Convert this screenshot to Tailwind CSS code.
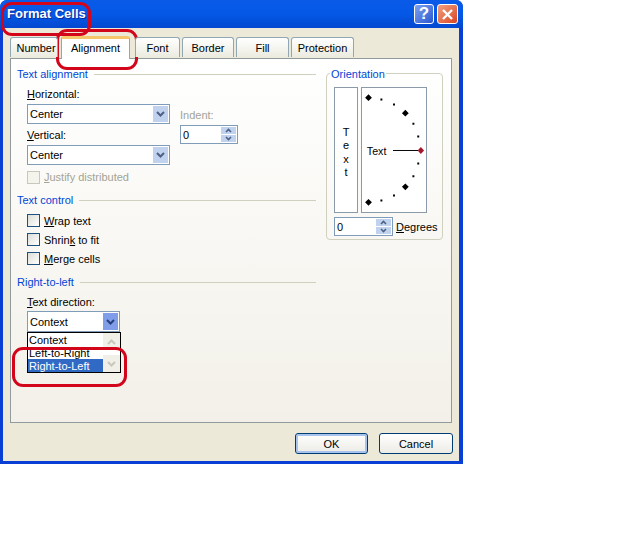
<!DOCTYPE html>
<html lang="en">
<head>
    <meta charset="UTF-8">
    <title>Format Cells</title>
    <script src="https://cdn.jsdelivr.net/npm/@tailwindcss/browser@4"></script>
</head>
<body class="bg-white">
<div class="relative w-[630px] h-[558px] overflow-hidden font-['Liberation_Sans',sans-serif] text-[11px] leading-[14px] text-black">

    <!-- window -->
    <div class="w-[463px] h-[464px] rounded-t-[7px] bg-[#0a3fd6] flex flex-col">
        <div class="h-[28px] shrink-0 rounded-t-[7px] bg-gradient-to-b from-[#0a5ae8] via-[#0458e6] to-[#0348d0] flex items-center pl-[7px] pr-[5px]">
            <span class="text-[13px] font-bold text-white [text-shadow:1px_1px_0_#0a2c9c]">Format Cells</span>
            <div class="ml-auto flex gap-[3px]">
                <div class="w-[20px] h-[20px] rounded-[3px] border border-white bg-gradient-to-br from-[#7fa2ee] to-[#2a55cf] flex items-center justify-center text-white text-[17px] font-bold">?</div>
                <div class="w-[21px] h-[20px] rounded-[3px] border border-white bg-gradient-to-br from-[#f0a080] to-[#d8401c] flex items-center justify-center">
                    <svg width="13" height="13" viewBox="0 0 13 13"><path d="M2 2 L11 11 M11 2 L2 11" stroke="white" stroke-width="2.4" fill="none"/></svg>
                </div>
            </div>
        </div>

        <div class="flex-1 ml-[3px] mr-[4px] mb-[3px] bg-[#ece9d8] pl-[7px] pt-[9px] flex flex-col">
            <!-- tabs -->
            <div class="h-[21px] flex items-end relative z-10 text-[11px]">
                <div class="w-[48px] h-[20px] mb-px pl-[4px] border border-b-0 border-[#91a7b4] rounded-t-[3px] bg-gradient-to-b from-white to-[#ecebe0] flex items-center justify-center">Number</div>
                <div class="w-[69px] h-[23px] ml-[3px] -mb-px pb-[3px] border-x border-[#91a7b4] border-t-[3px] border-t-[#f5c66a] rounded-t-[3px] bg-white flex items-center justify-center">Alignment</div>
                <div class="w-[45px] h-[20px] ml-[5px] mb-px border border-b-0 border-[#91a7b4] rounded-t-[3px] bg-gradient-to-b from-white to-[#ecebe0] flex items-center justify-center">Font</div>
                <div class="w-[52px] h-[20px] ml-[2px] mb-px border border-b-0 border-[#91a7b4] rounded-t-[3px] bg-gradient-to-b from-white to-[#ecebe0] flex items-center justify-center">Border</div>
                <div class="w-[53px] h-[20px] ml-[2px] mb-px border border-b-0 border-[#91a7b4] rounded-t-[3px] bg-gradient-to-b from-white to-[#ecebe0] flex items-center justify-center">Fill</div>
                <div class="w-[63px] h-[20px] ml-[2px] mb-px border border-b-0 border-[#91a7b4] rounded-t-[3px] bg-gradient-to-b from-white to-[#ecebe0] flex items-center justify-center">Protection</div>
            </div>

            <!-- panel -->
            <div class="w-[442px] h-[365px] border border-[#919b9c] bg-gradient-to-b from-white to-[#f2f0e8] pl-[6px] pt-[8px] flex">
                <div class="w-[299px]">
                    <div class="h-[14px] flex items-center gap-[6px]"><span class="text-[#0046d5]">Text alignment</span><div class="flex-1 h-px bg-[#d0d0bf]"></div></div>

                    <div class="flex ml-[10px]">
                        <div class="w-[153px]">
                            <div class="mt-[6px] h-[14px]"><u>H</u>orizontal:</div>
                            <div class="mt-[3px] w-[143px] h-[20px] border border-[#7f9db9] bg-white flex items-center pl-[2px] pr-[1px]">
                                <span>Center</span>
                                <div class="ml-auto w-[15px] h-[16px] bg-[#c1d2ee] flex items-center justify-center">
                                    <svg width="9" height="6" viewBox="0 0 9 6"><path d="M1 1 L4.5 4.5 L8 1" stroke="#4d6185" stroke-width="2" fill="none"/></svg>
                                </div>
                            </div>
                            <div class="mt-[4px] h-[14px]"><u>V</u>ertical:</div>
                            <div class="mt-[3px] w-[143px] h-[20px] border border-[#7f9db9] bg-white flex items-center pl-[2px] pr-[1px]">
                                <span>Center</span>
                                <div class="ml-auto w-[15px] h-[16px] bg-[#c1d2ee] flex items-center justify-center">
                                    <svg width="9" height="6" viewBox="0 0 9 6"><path d="M1 1 L4.5 4.5 L8 1" stroke="#4d6185" stroke-width="2" fill="none"/></svg>
                                </div>
                            </div>
                        </div>
                        <div class="pt-[27px]">
                            <div class="h-[14px] text-[#a3a396]">Indent:</div>
                            <div class="mt-[3px] w-[58px] h-[19px] border border-[#7f9db9] bg-white flex items-center pl-[2px] pr-[1px]">
                                <span>0</span>
                                <div class="ml-auto w-[15px] h-[15px] flex flex-col gap-px">
                                    <div class="flex-1 bg-[#c1d2ee] flex items-center justify-center"><svg width="7" height="5" viewBox="0 0 7 5"><path d="M1 4 L3.5 1.5 L6 4" stroke="#4d6185" stroke-width="1.6" fill="none"/></svg></div>
                                    <div class="flex-1 bg-[#c1d2ee] flex items-center justify-center"><svg width="7" height="5" viewBox="0 0 7 5"><path d="M1 1 L3.5 3.5 L6 1" stroke="#4d6185" stroke-width="1.6" fill="none"/></svg></div>
                                </div>
                            </div>
                        </div>
                    </div>

                    <div class="ml-[10px] mt-[6px] h-[13px] flex items-center gap-[4px] text-[#a3a396]">
                        <div class="w-[13px] h-[13px] border border-[#c9c7ba] bg-[#f4f3ec]"></div><span class="mb-[2px]"><u>J</u>ustify distributed</span>
                    </div>

                    <div class="mt-[9px] h-[14px] flex items-center gap-[6px]"><span class="text-[#0046d5]">Text control</span><div class="flex-1 h-px bg-[#d0d0bf]"></div></div>
                    <div class="ml-[10px] mt-[7px] h-[13px] flex items-center gap-[4px]">
                        <div class="w-[13px] h-[13px] border border-[#1c5180] bg-gradient-to-br from-[#dcdcd7] to-white"></div><span><u>W</u>rap text</span>
                    </div>
                    <div class="ml-[10px] mt-[6px] h-[13px] flex items-center gap-[4px]">
                        <div class="w-[13px] h-[13px] border border-[#1c5180] bg-gradient-to-br from-[#dcdcd7] to-white"></div><span>Shrin<u>k</u> to fit</span>
                    </div>
                    <div class="ml-[10px] mt-[6px] h-[13px] flex items-center gap-[4px]">
                        <div class="w-[13px] h-[13px] border border-[#1c5180] bg-gradient-to-br from-[#dcdcd7] to-white"></div><span><u>M</u>erge cells</span>
                    </div>

                    <div class="mt-[10px] h-[14px] flex items-center gap-[6px]"><span class="text-[#0046d5]">Right-to-left</span><div class="flex-1 h-px bg-[#d0d0bf]"></div></div>
                    <div class="ml-[10px] mt-[6px] h-[14px]"><u>T</u>ext direction:</div>
                    <div class="ml-[10px] mt-[2px] w-[93px] h-[21px] border border-[#7f9db9] bg-white flex items-center pl-[2px] pr-[1px]">
                        <span>Context</span>
                        <div class="ml-auto w-[15px] h-[17px] bg-[#7f9de8] flex items-center justify-center">
                            <svg width="9" height="6" viewBox="0 0 9 6"><path d="M1 1 L4.5 4.5 L8 1" stroke="#27407c" stroke-width="2" fill="none"/></svg>
                        </div>
                    </div>
                </div>

                <!-- orientation group -->
                <div class="relative ml-[10px] mt-[6px] w-[117px] h-[167px] border border-[#d0d0bf] rounded-[4px] pl-[7px] pt-[13px]">
                    <span class="absolute -top-[7px] left-[3px] px-px bg-white text-[#0046d5]">Orientation</span>
                    <div class="flex gap-[3px]">
                        <div class="w-[24px] h-[126px] border border-[#8a9aa8] bg-white flex flex-col items-center pt-[38px] leading-[13.4px]">
                            <span>T</span><span>e</span><span>x</span><span>t</span>
                        </div>
                        <svg width="66" height="126" viewBox="361 87 66 126" class="border border-[#8a9aa8] bg-white box-border">
                            <path d="M367.7 92.5 L371.2 96 L367.7 99.5 L364.2 96 Z M405.7 108.5 L409.2 112 L405.7 115.5 L402.2 112 Z M405.7 184.5 L409.2 188 L405.7 191.5 L402.2 188 Z M367.7 200.5 L371.2 204 L367.7 207.5 L364.2 204 Z" fill="#000"/>
                            <path d="M380 97h2v2h-2z M393 102h2v2h-2z M413 122h2v2h-2z M418 135h2v2h-2z M418 163h2v2h-2z M413 176h2v2h-2z M393 196h2v2h-2z M380 201h2v2h-2z" fill="#000"/>
                            <path d="M393 150.5 H419" stroke="#000" stroke-width="1"/>
                            <path d="M421.7 147 L425 150.5 L421.7 154 L418.4 150.5 Z" fill="#a5182c"/>
                            <text x="366" y="155" font-size="11" font-family="Liberation Sans" fill="#000">Text</text>
                        </svg>
                    </div>
                    <div class="flex items-center mt-[4px]">
                        <div class="w-[59px] h-[19px] border border-[#7f9db9] bg-white flex items-center pl-[2px] pr-[1px]">
                            <span>0</span>
                            <div class="ml-auto w-[15px] h-[15px] flex flex-col gap-px">
                                <div class="flex-1 bg-[#c1d2ee] flex items-center justify-center"><svg width="7" height="5" viewBox="0 0 7 5"><path d="M1 4 L3.5 1.5 L6 4" stroke="#4d6185" stroke-width="1.6" fill="none"/></svg></div>
                                <div class="flex-1 bg-[#c1d2ee] flex items-center justify-center"><svg width="7" height="5" viewBox="0 0 7 5"><path d="M1 1 L3.5 3.5 L6 1" stroke="#4d6185" stroke-width="1.6" fill="none"/></svg></div>
                            </div>
                        </div>
                        <span class="ml-[3px]"><u>D</u>egrees</span>
                    </div>
                </div>
            </div>

            <!-- buttons -->
            <div class="mt-[10px] flex gap-[11px] pl-[285px]">
                <button class="w-[73px] h-[21px] rounded-[3px] border border-[#003c74] bg-gradient-to-b from-white to-[#ecebe5] shadow-[inset_0_0_0_2px_#a9c4ec] flex items-center justify-center">OK</button>
                <button class="w-[74px] h-[21px] rounded-[3px] border border-[#003c74] bg-gradient-to-b from-white to-[#ecebe5] flex items-center justify-center">Cancel</button>
            </div>
        </div>
    </div>

    <!-- opened dropdown list -->
    <div class="absolute left-[27px] top-[332px] w-[94px] h-[41px] border border-black bg-white flex leading-[15px]">
        <div class="flex-1 flex flex-col">
            <span class="h-[13px] pl-px">Context</span>
            <span class="h-[13px] pl-px">Left-to-Right</span>
            <span class="h-[13px] pl-px bg-[#316ac5] text-white">Right-to-Left</span>
        </div>
        <div class="w-[17px] flex flex-col justify-between">
            <div class="h-[17px] bg-[#f0efe8] flex items-center justify-center"><svg width="9" height="6" viewBox="0 0 9 6"><path d="M1 5 L4.5 1.5 L8 5" stroke="#c8c8bc" stroke-width="2" fill="none"/></svg></div>
            <div class="h-[17px] bg-[#f0efe8] flex items-center justify-center"><svg width="9" height="6" viewBox="0 0 9 6"><path d="M1 1 L4.5 4.5 L8 1" stroke="#c8c8bc" stroke-width="2" fill="none"/></svg></div>
        </div>
    </div>

    <!-- red annotation outlines -->
    <div class="absolute left-[1px] top-[2px] w-[90px] h-[34px] border-[3px] border-[#d3051b] rounded-[11px]"></div>
    <div class="absolute left-[56px] top-[29px] w-[82px] h-[41px] border-[3px] border-[#d3051b] rounded-[11px]"></div>
    <div class="absolute left-[12px] top-[347px] w-[115px] h-[40px] border-[3px] border-[#d3051b] rounded-[11px]"></div>
</div>
</body>
</html>
